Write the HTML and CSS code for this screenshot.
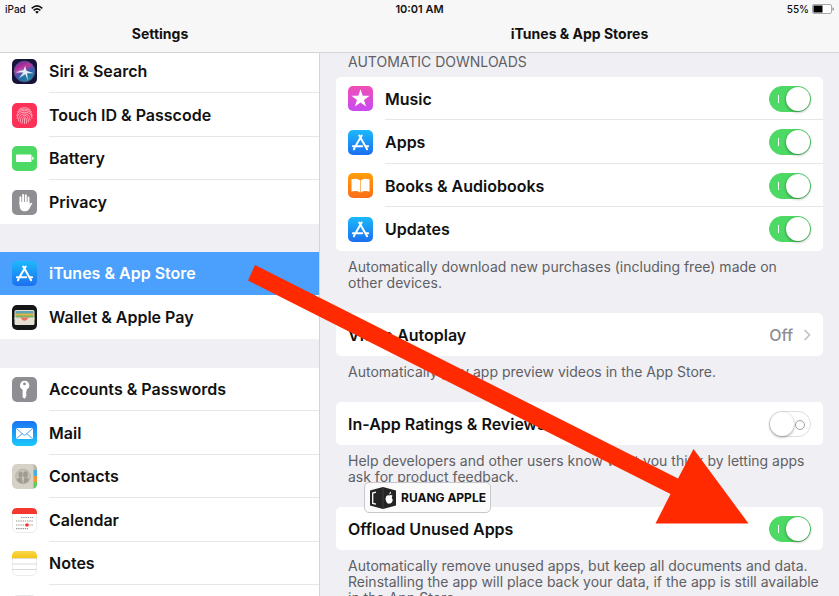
FILE: index.html
```html
<!DOCTYPE html>
<html lang="en">
<head>
<meta charset="utf-8">
<meta name="viewport" content="width=device-width, initial-scale=1">
<title>Settings</title>
<link rel="stylesheet" href="styles.css">
</head>
<body>
<svg class="defs" aria-hidden="true">
  <defs>
    <linearGradient id="g-store" x1="0" y1="0" x2="0" y2="1"><stop offset="0" stop-color="#1cb9fb"/><stop offset="1" stop-color="#1c6ff0"/></linearGradient>
    <linearGradient id="g-mail" x1="0" y1="0" x2="0" y2="1"><stop offset="0" stop-color="#1d73f2"/><stop offset="1" stop-color="#1bc8fc"/></linearGradient>
    <linearGradient id="g-music" x1="0" y1="0" x2="0" y2="1"><stop offset="0" stop-color="#f04fb4"/><stop offset="1" stop-color="#c84bf2"/></linearGradient>
    <linearGradient id="g-books" x1="0" y1="0" x2="0" y2="1"><stop offset="0" stop-color="#ff9f0a"/><stop offset="1" stop-color="#fb6d18"/></linearGradient>
    <linearGradient id="g-notes" x1="0" y1="0" x2="0" y2="1"><stop offset="0" stop-color="#fbd84a"/><stop offset="1" stop-color="#f5c518"/></linearGradient>
    <linearGradient id="g-siri" x1=".2" y1="0" x2=".7" y2="1"><stop offset="0" stop-color="#6b2aa0"/><stop offset=".35" stop-color="#c0359c"/><stop offset=".6" stop-color="#2b5fae"/><stop offset="1" stop-color="#1a8f98"/></linearGradient>
    <clipPath id="tile"><rect width="25" height="25" rx="5"/></clipPath>
    <symbol id="i-store" viewBox="0 0 25 25">
      <rect width="25" height="25" rx="5" fill="url(#g-store)"/>
      <g fill="none" stroke="#fff" stroke-width="2" stroke-linecap="round"><path d="M13.7 5.600 7.600 16.100M11.200 5.600l7.900 13.600M4.900 16.200h9.300M17.700 16.200h2.400M6.600 18l-.7 1.300"/></g>
    </symbol>
  </defs>
</svg>

<header class="topbar">
  <div class="status">
    <span class="status-side">iPad
      <svg class="wifi" viewBox="0 0 12 9" aria-hidden="true"><g fill="none" stroke="#111" stroke-width="1.600"><path d="M.7 3.300Q6-1.400 11.300 3.300M2.600 5.300Q6 2.300 9.400 5.300"/></g><path d="M4.100 6.700Q6 5.200 7.900 6.700L6 8.800Z" fill="#111"/></svg>
    </span>
    <time>10:01 AM</time>
    <span class="status-side status-end">55%
      <svg class="power" viewBox="0 0 22 10" aria-hidden="true"><rect x=".5" y=".5" width="19" height="9" rx="1.500" fill="#fff" stroke="#aaa"/><rect x="1.500" y="1.500" width="9" height="7" fill="#000"/><path d="M20.500 3.200v3.600q1.500-.5 1.500-1.800t-1.500-1.800z" fill="#888"/></svg>
    </span>
  </div>
  <div class="titles">
    <h1 class="title">Settings</h1>
    <h2 class="title">iTunes &amp; App Stores</h2>
  </div>
</header>

<div class="panes">
  <nav class="sidebar" aria-label="Settings">
    <ul class="group group-scrolled">
      <li class="row"><svg class="icon" viewBox="0 0 25 25"><rect width="25" height="25" rx="5" fill="#17143c"/><circle cx="12.500" cy="12.500" r="10.300" fill="url(#g-siri)" stroke="#6b5f96" stroke-width=".7"/><path d="M3 13q5-3 8.500-3l2-4q1 5 2 6l6.500 2q-4 1-6.500 1l1 6-3-5-7 4q2-4 4-6z" fill="#9be3f0" opacity=".3"/><path d="M3.500 14q4.500-2.500 8-2.800l1.500-4 1.300 4.600 7.200 2.400-6.500-.2.800 7.500-2.500-6.500L7 19l4.500-5.500Q8 13 3.500 14z" fill="#fff" opacity=".85"/></svg><a class="label" href="#siri">Siri &amp; Search</a></li>
      <li class="row"><svg class="icon" viewBox="0 0 25 25"><rect width="25" height="25" rx="5" fill="#fc3158"/><g fill="none" stroke="#ffc3cd" stroke-width=".8" stroke-linecap="round"><path d="M7 6.500q5.500-4 11 0M5.300 9q7.200-6.200 14.400 0M4.800 12.500q1.200-4.800 7.700-5 6.500.2 7.700 5M5 15.500q.6-6.200 7.500-6.300Q19.800 9.400 20 15M6.500 17.700q.2-6.800 6-6.900 5.700.1 5.600 6.500M8.200 19.300q.3-6.800 4.300-7 3.900.1 3.900 6.700M10.200 20.200q.3-6 2.300-6.300 2 .1 2 6.300M12.500 15.500v5.100"/></g></svg><a class="label" href="#touch">Touch ID &amp; Passcode</a></li>
      <li class="row"><svg class="icon" viewBox="0 0 25 25"><rect width="25" height="25" rx="5" fill="#4cd964"/><rect x="4" y="8.500" width="15.500" height="7.500" rx=".8" fill="#fff"/><path d="M20.200 10.600q1.500.3 1.500 1.700t-1.500 1.700z" fill="#fff"/></svg><a class="label" href="#battery">Battery</a></li>
      <li class="row"><svg class="icon" viewBox="0 0 25 25"><rect width="25" height="25" rx="5" fill="#8e8e93"/><g fill="none" stroke="#fff" stroke-width="1.900" stroke-linecap="round"><path d="M8.400 13.500V7.300M11.100 12V5M13.800 12V5.200M16.500 13.500V7.500"/></g><path d="M7.450 12h10v2.600l1-1.300q1-1.100 2-.4-1.200 2-2.300 4.300-1.500 4-5 4.100-4.200 0-5.200-3.400-.5-2-.5-5.900z" fill="#fff"/></svg><a class="label" href="#privacy">Privacy</a></li>
    </ul>
    <ul class="group">
      <li class="row row-selected"><svg class="icon"><use href="#i-store"/></svg><a class="label" href="#store" aria-current="page">iTunes &amp; App Store</a></li>
      <li class="row"><svg class="icon" viewBox="0 0 25 25"><rect width="25" height="25" rx="5" fill="#151515"/><rect x="2.500" y="5" width="20" height="15" rx="1.500" fill="#e5e0d3"/><path d="M3.500 6h18v3h-18z" fill="#5ba5b9"/><path d="M3.500 8.500h18V11h-18z" fill="#e2b43d"/><path d="M3.500 10.500h18V13h-18z" fill="#76b36b"/><path d="M2.500 12.500h20v2h-20z" fill="#e5e0d3"/><path d="M7 12.500h11q-1.800.1-2.400 1.300-.9 2-3.100 2t-3.100-2Q8.800 12.600 7 12.500z" fill="#ef6e5d"/></svg><a class="label" href="#wallet">Wallet &amp; Apple Pay</a></li>
    </ul>
    <ul class="group">
      <li class="row"><svg class="icon" viewBox="0 0 25 25"><rect width="25" height="25" rx="5" fill="#8e8e93"/><path fill-rule="evenodd" d="M12.500 3.700a4.700 4.700 0 0 1 2.200 8.900v1.700l-1 1 1 1.100-1 1.100 1 1.100-1 1.100v.8l-1.200 1.200-1.900-1.500v-7.600a4.700 4.700 0 0 1 1.900-8.900zm0 1.800a1.400 1.400 0 1 0 0 2.800 1.400 1.400 0 0 0 0-2.800z" fill="#fff"/></svg><a class="label" href="#accounts">Accounts &amp; Passwords</a></li>
      <li class="row"><svg class="icon" viewBox="0 0 25 25"><rect width="25" height="25" rx="5" fill="url(#g-mail)"/><rect x="4" y="7" width="17" height="11" rx="1.500" fill="#fff"/><path d="m4.600 7.600 6.600 6q1.300 1 2.600 0l6.600-6M4.600 17.500l5.800-5M20.400 17.500l-5.800-5" fill="none" stroke="#2f9cf5" stroke-width=".9"/></svg><a class="label" href="#mail">Mail</a></li>
      <li class="row"><svg class="icon" viewBox="0 0 25 25"><g clip-path="url(#tile)"><path d="M0 0h25v25H0z" fill="#d6d2c7"/><path d="M21.500 0H25v7h-3.500z" fill="#b8b5ac"/><path d="M21.500 6H25v6.500h-3.500z" fill="#43aee6"/><path d="M21.500 12H25v6h-3.500z" fill="#f69332"/><path d="M21.500 18H25v7h-3.500z" fill="#5fcb58"/></g><circle cx="11" cy="12.500" r="7.300" fill="#c9c5ba" stroke="#aaa69b" stroke-width=".7"/><g fill="#a09c91"><ellipse cx="8.500" cy="10.500" rx="2.200" ry="3"/><ellipse cx="13.500" cy="10.500" rx="2.400" ry="3.200"/><path d="M4.900 16q.4-2 2.700-2.400h2.200l.8 5.700Q7.200 19.500 4.900 16zM11.400 19.300l.8-5.500h2.500q2 .5 2.500 2-2 3.500-5.800 3.500z"/></g></svg><a class="label" href="#contacts">Contacts</a></li>
      <li class="row"><svg class="icon" viewBox="0 0 25 25"><rect x=".5" y=".5" width="24" height="24" rx="5" fill="#fff" stroke="#ececec"/><path d="M0 6V5q0-5 5-5h15q5 0 5 5v1z" fill="#f4372f"/><g stroke="#999" stroke-width="1.200" stroke-dasharray="1.400 .8"><path d="M9 9.500h12M4 13h17M4 17h17M4 20.700h12"/></g><circle cx="15" cy="17" r="1.800" fill="#f4372f"/></svg><a class="label" href="#calendar">Calendar</a></li>
      <li class="row"><svg class="icon" viewBox="0 0 25 25"><rect x=".5" y=".5" width="24" height="24" rx="5" fill="#fff" stroke="#ececec"/><path d="M0 7V5q0-5 5-5h15q5 0 5 5v2z" fill="url(#g-notes)"/><path d="M0 7.500h25" stroke="#c3b98f" stroke-width=".8" stroke-dasharray="1 .7"/><path d="M0 13h25M0 18.500h25" stroke="#d5d5d8" stroke-width=".9"/></svg><a class="label" href="#notes">Notes</a></li>
      <li class="row"><svg class="icon" viewBox="0 0 25 25"><rect x=".5" y=".5" width="24" height="24" rx="5" fill="#fff" stroke="#e6e6e6"/></svg></li>
    </ul>
  </nav>

  <main class="detail">
    <h3 class="caption">AUTOMATIC DOWNLOADS</h3>
    <div class="card">
      <div class="row"><svg class="icon" viewBox="0 0 25 25"><rect width="25" height="25" rx="5" fill="url(#g-music)"/><path d="m12.500 3.300 2.200 6.500h6.900L16 13.900l2.100 6.700-5.600-4-5.600 4L9 13.900 3.400 9.800h6.900z" fill="#fff"/></svg><label class="label" for="music">Music</label><input class="switch" type="checkbox" id="music" checked></div>
      <div class="row"><svg class="icon"><use href="#i-store"/></svg><label class="label" for="apps">Apps</label><input class="switch" type="checkbox" id="apps" checked></div>
      <div class="row"><svg class="icon" viewBox="0 0 25 25"><rect width="25" height="25" rx="5" fill="url(#g-books)"/><path d="M12.200 7.500Q9.500 4.800 3.500 6.200v12.300q5.500-1.300 8.700 1zM12.800 7.500q2.700-2.700 8.700-1.300v12.300q-5.500-1.300-8.700 1z" fill="#fff"/></svg><label class="label" for="books">Books &amp; Audiobooks</label><input class="switch" type="checkbox" id="books" checked></div>
      <div class="row"><svg class="icon"><use href="#i-store"/></svg><label class="label" for="updates">Updates</label><input class="switch" type="checkbox" id="updates" checked></div>
    </div>
    <p class="note">Automatically download new purchases (including free) made on<br>other devices.</p>

    <div class="card">
      <a class="row" href="#autoplay"><span class="label">Video Autoplay</span><span class="value">Off</span><svg class="chevron" viewBox="0 0 8 12" aria-hidden="true"><path d="m1.500 1 5 5-5 5" fill="none" stroke="#c2c2c7" stroke-width="1.700"/></svg></a>
    </div>
    <p class="note">Automatically play app preview videos in the App Store.</p>

    <div class="card">
      <div class="row"><label class="label" for="ratings">In-App Ratings &amp; Reviews</label><input class="switch" type="checkbox" id="ratings"></div>
    </div>
    <p class="note">Help developers and other users know what you think by letting apps<br>ask for product feedback.</p>

    <div class="card">
      <div class="row"><label class="label" for="offload">Offload Unused Apps</label><input class="switch" type="checkbox" id="offload" checked></div>
    </div>
    <p class="note">Automatically remove unused apps, but keep all documents and data.<br>Reinstalling the app will place back your data, if the app is still available<br>in the App Store.</p>

    <div class="badge">
      <svg class="badge-logo" viewBox="0 0 26 22" aria-hidden="true"><path d="M0 3.500 13 0l13 3.500v15L13 22 0 18.500z" fill="#242424"/><path d="M6 5.200 2.700 6v10.500l3.300.7" fill="none" stroke="#fff" stroke-width="1.300"/><path d="M13 0v22" stroke="#555" stroke-width=".6"/><path d="M19.200 8.500q1.800-1.300 3.400.2-1.800 1.800.3 4-1.500 4.600-3.500 3.700-1.500.9-3-1.400-1.800-3-.3-5.500 1.300-1.700 3.100-1zM19.200 7.700q-.1-2.500 1.900-3.200.2 2.400-1.900 3.200z" fill="#fff"/></svg>
      <span>RUANG APPLE</span>
    </div>
  </main>
</div>

<svg class="arrow" viewBox="0 0 501 259" aria-hidden="true"><path d="M7 0 430 213.500 445.500 184 500.500 258.500H407.500L422.500 229 0 15.500z" fill="#ff2a00"/></svg>
</body>
</html>
```
FILE: styles.css
```css
* {
  box-sizing: border-box;
}

body {
  margin: 0;
  height: 100vh;
  display: flex;
  flex-direction: column;
  position: relative;
  overflow: hidden;
  background: #efeff4;
  color: #111;
  font-family: Inter, "Liberation Sans", sans-serif;
  font-size: 16px;
  font-weight: 600;
}

a {
  color: inherit;
  text-decoration: none;
}

.defs {
  position: absolute;
  width: 0;
  height: 0;
}

.topbar {
  flex: none;
  height: 53px;
  background: #f7f7f7;
  border-bottom: 1px solid #d4d4d8;
  position: relative;
  z-index: 1;
}

.status {
  display: flex;
  justify-content: space-between;
  height: 18px;
  padding: 0 5px;
  align-items: center;
  font-size: 10px;
  font-weight: 500;
}

.status time {
  font-size: 11px;
  font-weight: 600;
}

.status-side {
  flex: 1;
  display: flex;
  align-items: center;
  gap: 5px;
}

.status-end {
  justify-content: flex-end;
  gap: 3px;
}

.wifi {
  width: 12px;
  height: 9px;
}

.power {
  width: 22px;
  height: 10px;
}

.titles,
.panes {
  display: grid;
  grid-template-columns: 320px minmax(0, 1fr);
}

.titles {
  text-align: center;
}

.title {
  margin: 0;
  font-size: 14px;
  line-height: 32px;
  font-weight: 700;
}

.panes {
  flex: 1;
  min-height: 0;
}

.sidebar {
  border-right: 1px solid #d4d4d8;
  overflow: hidden;
}

.group {
  list-style: none;
  margin: 0 0 29px;
  padding: 0;
  background: #fff;
}

.group-scrolled {
  margin-top: -3px;
  margin-bottom: 28px;
}

.row {
  display: flex;
  align-items: center;
  height: 43px;
  padding-left: 12px;
}

.row:nth-child(even) {
  height: 44px;
}

.icon {
  flex: none;
  width: 25px;
  height: 25px;
  margin-right: 12px;
}

.label {
  flex: 1;
  align-self: stretch;
  display: flex;
  align-items: center;
  white-space: nowrap;
}

.row:not(:last-child) .label {
  border-bottom: 1px solid #e6e6e9;
}

.row-selected {
  background: #4aa0fc;
  color: #fff;
}

.row-selected:not(:last-child) .label {
  border-color: #4aa0fc;
}

.detail {
  position: relative;
  overflow: hidden;
  padding: 0 16px;
}

.caption {
  margin: 0;
  padding: 1px 12px 7px;
  font-size: 14px;
  line-height: 16px;
  font-weight: 400;
  color: #5f5f64;
}

.card {
  background: #fff;
  border-radius: 5px;
}

.card .row:not(:last-child) {
  background: linear-gradient(#e6e6e9, #e6e6e9) right bottom / calc(100% - 49px) 1px no-repeat;
}

.card .row:not(:last-child) .label {
  border-bottom: 0;
}

.card .row {
  padding-right: 12px;
}

.note {
  margin: 0;
  padding: 8px 0 22px 12px;
  font-size: 14px;
  line-height: 16px;
  font-weight: 400;
  color: #5f5f64;
  white-space: nowrap;
}

.value {
  color: #8e8e93;
  font-weight: 500;
}

.chevron {
  width: 8px;
  height: 12px;
  margin-left: 10px;
}

.switch {
  appearance: none;
  flex: none;
  position: relative;
  width: 42px;
  height: 26px;
  margin: 0;
  border: 1px solid #dedee0;
  border-radius: 13px;
  background: #fff;
}

.switch::before {
  content: "";
  position: absolute;
  top: 0;
  left: 0;
  width: 24px;
  height: 24px;
  border-radius: 50%;
  background: #fff;
  box-shadow: 0 1px 3px rgba(0, 0, 0, 0.4);
}

.switch::after {
  content: "";
  position: absolute;
  top: 8px;
  right: 5px;
  width: 8px;
  height: 8px;
  border: 1px solid #a0a0a0;
  border-radius: 50%;
}

.switch:checked {
  background: #4cd964;
  border-color: #4cd964;
}

.switch:checked::before {
  left: 16px;
}

.switch:checked::after {
  left: 8px;
  width: 1px;
  border: 0;
  border-radius: 0;
  background: #fff;
}

.badge {
  position: absolute;
  left: 44px;
  top: 429px;
  display: flex;
  align-items: center;
  gap: 5px;
  height: 31px;
  padding: 0 4px 0 5px;
  border: 1px solid #c8c8cc;
  border-radius: 5px;
  background: #fbfbfc;
  font-size: 12px;
  font-weight: 700;
  white-space: nowrap;
}

.badge-logo {
  width: 26px;
  height: 22px;
}

.arrow {
  position: absolute;
  left: 248px;
  top: 265px;
  width: 501px;
  height: 259px;
  pointer-events: none;
  z-index: 2;
}
```
